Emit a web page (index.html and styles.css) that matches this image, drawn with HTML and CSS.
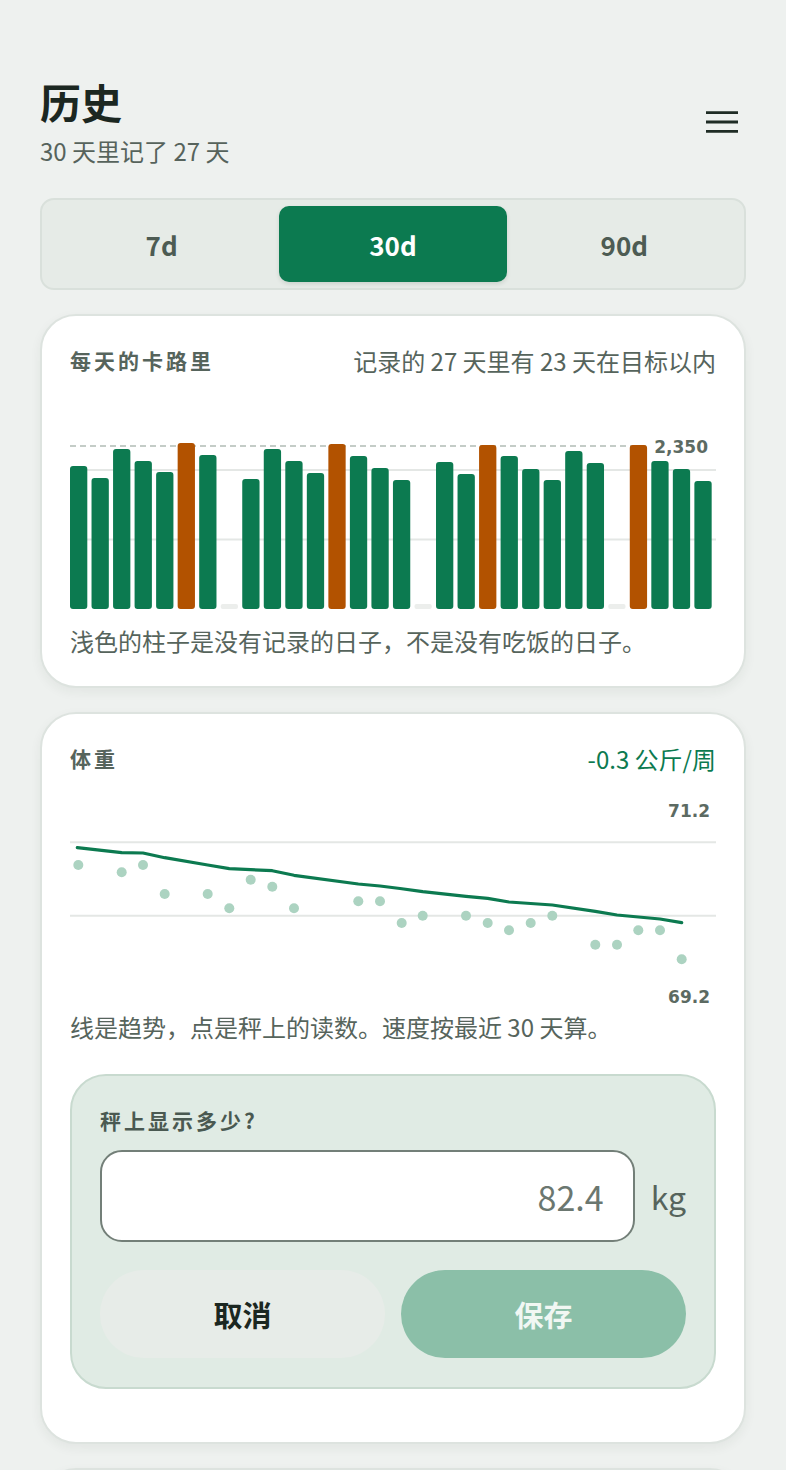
FILE: index.html
```html
<!DOCTYPE html>
<html lang="zh-CN">
<head>
<meta charset="utf-8">
<title>历史</title>
<link rel="stylesheet" href="styles.css">
</head>
<body>
<div class="page">
  <header class="top">
    <div class="titles">
      <h1 class="title">历史</h1>
      <p class="subtitle">30 天里记了 27 天</p>
    </div>
    <button class="menu" aria-label="菜单">
      <svg width="32" height="24" viewBox="0 0 32 24">
        <path d="M0 2.7H32M0 12H32M0 21.3H32" stroke="#1f2c25" stroke-width="2.8" fill="none"/>
      </svg>
    </button>
  </header>

  <nav class="seg">
    <button class="seg-item">7d</button>
    <button class="seg-item active">30d</button>
    <button class="seg-item">90d</button>
  </nav>

  <section class="card">
    <div class="card-head">
      <h2 class="card-title">每天的卡路里</h2>
      <span class="card-meta">记录的 27 天里有 23 天在目标以内</span>
    </div>
    <svg class="bar-chart" viewBox="0 0 646 208" width="646" height="208">
      <line class="grid" x1="0" y1="69" x2="646" y2="69"/>
      <line class="grid" x1="0" y1="138.5" x2="646" y2="138.5"/>
      <line class="target" x1="0" y1="45" x2="576" y2="45"/>
      <g class="bars">
        <rect class="ok" x="0" y="65" width="17.3" height="143" rx="3"/>
        <rect class="ok" x="21.53" y="77" width="17.3" height="131" rx="3"/>
        <rect class="ok" x="43.06" y="48" width="17.3" height="160" rx="3"/>
        <rect class="ok" x="64.59" y="60" width="17.3" height="148" rx="3"/>
        <rect class="ok" x="86.12" y="71" width="17.3" height="137" rx="3"/>
        <rect class="over" x="107.65" y="42" width="17.3" height="166" rx="3"/>
        <rect class="ok" x="129.18" y="54" width="17.3" height="154" rx="3"/>
        <rect class="empty" x="150.71" y="203" width="17.3" height="5" rx="2"/>
        <rect class="ok" x="172.24" y="78" width="17.3" height="130" rx="3"/>
        <rect class="ok" x="193.77" y="48" width="17.3" height="160" rx="3"/>
        <rect class="ok" x="215.3" y="60" width="17.3" height="148" rx="3"/>
        <rect class="ok" x="236.83" y="72" width="17.3" height="136" rx="3"/>
        <rect class="over" x="258.36" y="43" width="17.3" height="165" rx="3"/>
        <rect class="ok" x="279.89" y="55" width="17.3" height="153" rx="3"/>
        <rect class="ok" x="301.42" y="67" width="17.3" height="141" rx="3"/>
        <rect class="ok" x="322.95" y="79" width="17.3" height="129" rx="3"/>
        <rect class="empty" x="344.48" y="203" width="17.3" height="5" rx="2"/>
        <rect class="ok" x="366.01" y="61" width="17.3" height="147" rx="3"/>
        <rect class="ok" x="387.54" y="73" width="17.3" height="135" rx="3"/>
        <rect class="over" x="409.07" y="44" width="17.3" height="164" rx="3"/>
        <rect class="ok" x="430.6" y="55" width="17.3" height="153" rx="3"/>
        <rect class="ok" x="452.13" y="68" width="17.3" height="140" rx="3"/>
        <rect class="ok" x="473.66" y="79" width="17.3" height="129" rx="3"/>
        <rect class="ok" x="495.19" y="50" width="17.3" height="158" rx="3"/>
        <rect class="ok" x="516.72" y="62" width="17.3" height="146" rx="3"/>
        <rect class="empty" x="538.25" y="203" width="17.3" height="5" rx="2"/>
        <rect class="over" x="559.78" y="44" width="17.3" height="164" rx="3"/>
        <rect class="ok" x="581.31" y="60" width="17.3" height="148" rx="3"/>
        <rect class="ok" x="602.84" y="68" width="17.3" height="140" rx="3"/>
        <rect class="ok" x="624.37" y="80" width="17.3" height="128" rx="3"/>
      </g>
      <text class="axis-label" x="638" y="52" text-anchor="end">2,350</text>
    </svg>
    <p class="caption">浅色的柱子是没有记录的日子，不是没有吃饭的日子。</p>
  </section>

  <section class="card">
    <div class="card-head">
      <h2 class="card-title">体重</h2>
      <span class="card-meta trend">-0.3 公斤/周</span>
    </div>
    <svg class="weight-chart" viewBox="0 0 646 220" width="646" height="220">
      <line class="grid" x1="0" y1="53.3" x2="646" y2="53.3"/>
      <line class="grid" x1="0" y1="126.7" x2="646" y2="126.7"/>
      <g class="dots">
        <circle cx="8.3" cy="76" r="5"/>
        <circle cx="51.7" cy="83.3" r="5"/>
        <circle cx="73" cy="76" r="5"/>
        <circle cx="94.7" cy="105" r="5"/>
        <circle cx="137.7" cy="105" r="5"/>
        <circle cx="159.3" cy="119.3" r="5"/>
        <circle cx="180.7" cy="90.7" r="5"/>
        <circle cx="202.3" cy="97.7" r="5"/>
        <circle cx="224" cy="119.3" r="5"/>
        <circle cx="288.3" cy="112.3" r="5"/>
        <circle cx="310" cy="112.3" r="5"/>
        <circle cx="331.7" cy="134" r="5"/>
        <circle cx="352.7" cy="126.7" r="5"/>
        <circle cx="396" cy="126.7" r="5"/>
        <circle cx="417.7" cy="134" r="5"/>
        <circle cx="439" cy="141.3" r="5"/>
        <circle cx="460.7" cy="134" r="5"/>
        <circle cx="482.3" cy="126.7" r="5"/>
        <circle cx="525.3" cy="155.7" r="5"/>
        <circle cx="547" cy="155.7" r="5"/>
        <circle cx="568.3" cy="141.3" r="5"/>
        <circle cx="590" cy="141.3" r="5"/>
        <circle cx="611.7" cy="170.3" r="5"/>
      </g>
      <polyline class="trend-line" points="7.3,58.7 51.7,63.7 73,64 94.7,68.7 137.7,76 159.3,79.7 202.3,81.7 224,86.3 288.3,95 310,97 330,99.5 352.7,102.7 396,107.3 417.7,109.3 439,113 482.3,116 525.3,122.3 547,126 590,130 611.7,133.7"/>
      <text class="axis-label" x="640" y="28" text-anchor="end">71.2</text>
      <text class="axis-label" x="640" y="214" text-anchor="end">69.2</text>
    </svg>
    <p class="caption caption-tight">线是趋势，点是秤上的读数。速度按最近 30 天算。</p>

    <form class="entry">
      <label class="entry-label" for="weight">秤上显示多少?</label>
      <div class="entry-row">
        <input class="entry-input" id="weight" type="text" value="82.4">
        <span class="unit">kg</span>
      </div>
      <div class="entry-actions">
        <button type="button" class="btn btn-cancel">取消</button>
        <button type="button" class="btn btn-save">保存</button>
      </div>
    </form>
  </section>

  <section class="card card-next"></section>
</div>
</body>
</html>
```

FILE: styles.css
```css
* { box-sizing: border-box; }

body {
  margin: 0;
  background: #eef1ef;
  font-family: "Noto Sans CJK SC", "Noto Sans", sans-serif;
  color: #1b2721;
}

.page {
  padding: 0 40px 40px;
}

.top {
  display: flex;
  justify-content: space-between;
  align-items: center;
  padding-top: 77px;
}

.title {
  margin: 0;
  font-size: 41px;
  line-height: 48px;
  font-weight: 700;
  color: #1b2721;
}

.subtitle {
  margin: 11px 0 0;
  font-size: 24px;
  line-height: 30px;
  color: #56635c;
}

.menu {
  background: none;
  border: 0;
  padding: 0;
  margin-right: 8px;
  width: 32px;
  height: 24px;
  display: flex;
}

.seg {
  margin-top: 32px;
  display: grid;
  grid-template-columns: repeat(3, 1fr);
  gap: 4px;
  padding: 6px;
  border: 2px solid #d9e0db;
  border-radius: 14px;
  background: #e6ebe7;
}

.seg-item {
  height: 76px;
  border: 0;
  background: none;
  border-radius: 10px;
  font-family: "Noto Sans CJK SC", sans-serif;
  font-weight: 700;
  font-size: 26px;
  color: #4d5b53;
}

.seg-item.active {
  background: #0c7a50;
  color: #ffffff;
  box-shadow: 0 2px 4px rgba(0, 40, 20, 0.12);
}

.card {
  margin-top: 24px;
  background: #ffffff;
  border: 2px solid #dde3df;
  border-radius: 36px;
  padding: 28px;
  box-shadow: 0 4px 12px rgba(30, 50, 40, 0.06);
}

.card-head {
  display: flex;
  justify-content: space-between;
  align-items: center;
  height: 32px;
}

.card-title {
  margin: 0;
  font-size: 21px;
  font-weight: 700;
  letter-spacing: 3px;
  color: #56645c;
}

.card-meta {
  font-size: 24px;
  color: #56645c;
}

.card-meta.trend {
  color: #0c7a50;
}

.bar-chart {
  display: block;
  margin-top: 25px;
  width: 100%;
  height: 208px;
}

.weight-chart {
  display: block;
  margin-top: 15px;
  width: 100%;
  height: 220px;
}

.grid {
  stroke: #e4e7e5;
  stroke-width: 2;
}

.target {
  stroke: #c4ccc7;
  stroke-width: 2;
  stroke-dasharray: 6 4;
}

.ok { fill: #0c7a50; }
.over { fill: #b25200; }
.empty { fill: #eceeec; }

.dots circle { fill: #acd3c1; }

.trend-line {
  fill: none;
  stroke: #0c7a50;
  stroke-width: 3.2;
  stroke-linejoin: round;
  stroke-linecap: round;
}

.axis-label {
  font-family: "DejaVu Sans", sans-serif;
  font-size: 17px;
  font-weight: 700;
  fill: #5c6a62;
}

.caption {
  margin: 15px 0 0;
  font-size: 24px;
  line-height: 34px;
  color: #56645c;
}

.caption-tight {
  margin-top: 1px;
}

.entry {
  margin: 30px 0 25px;
  background: #e0ebe4;
  border: 2px solid #c8dacf;
  border-radius: 36px;
  padding: 30px 28px 29px;
}

.entry-label {
  display: block;
  font-size: 21px;
  line-height: 28px;
  font-weight: 700;
  letter-spacing: 3px;
  color: #4a5951;
}

.entry-row {
  display: flex;
  align-items: center;
  gap: 16px;
  margin-top: 16px;
}

.entry-input {
  flex: 1;
  min-width: 0;
  height: 92px;
  border: 2px solid #737f78;
  border-radius: 22px;
  background: #ffffff;
  padding: 0 29px;
  text-align: right;
  font-family: "Noto Sans CJK SC", sans-serif;
  font-size: 34px;
  color: #6b7770;
}

.unit {
  font-size: 32px;
  color: #56645c;
}

.entry-actions {
  display: flex;
  gap: 16px;
  margin-top: 28px;
}

.btn {
  flex: 1;
  height: 88px;
  border: 0;
  border-radius: 44px;
  font-family: "Noto Sans CJK SC", sans-serif;
  font-weight: 700;
  font-size: 29px;
}

.btn-cancel {
  background: #e7ece8;
  color: #1b2721;
}

.btn-save {
  background: #8bbfa8;
  color: #f1f7f3;
}

.card-next {
  height: 160px;
}
```
